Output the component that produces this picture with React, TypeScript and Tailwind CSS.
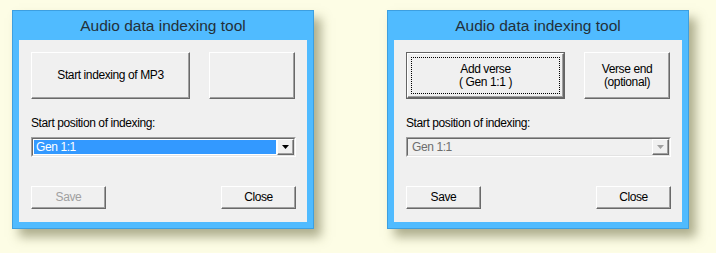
import React from "react";

const raised =
  "border border-t-white border-l-white border-r-[#696969] border-b-[#696969] bg-[#f0f0f0] shadow-[inset_-1px_-1px_0_#a0a0a0]";

function Btn({
  children,
  className = "",
  disabled = false,
  isDefault = false,
}: {
  children?: React.ReactNode;
  className?: string;
  disabled?: boolean;
  isDefault?: boolean;
}) {
  if (isDefault) {
    return (
      <div className={`border border-[#646464] ${className}`}>
        <div className={`${raised} h-full w-full p-[3px]`}>
          <div className="h-full w-full border border-dotted border-black flex flex-col items-center justify-center leading-[13px] text-black">
            {children}
          </div>
        </div>
      </div>
    );
  }
  return (
    <div
      className={`${raised} flex flex-col items-center justify-center leading-[13px] ${
        disabled ? "text-[#a0a0a0]" : "text-black"
      } ${className}`}
    >
      {children}
    </div>
  );
}

function Combo({ active }: { active: boolean }) {
  return (
    <div className="flex h-[20px] w-[265px] border border-t-[#a0a0a0] border-l-[#a0a0a0] border-r-white border-b-white">
      <div
        className={`flex flex-1 border border-t-[#696969] border-l-[#696969] border-r-[#e3e3e3] border-b-[#e3e3e3] ${
          active ? "bg-white" : "bg-[#f0f0f0]"
        }`}
      >
        <div
          className={`flex-1 flex items-center pl-[2px] ${
            active ? "bg-[#3399ff] text-white m-px" : "text-[#6d6d6d] ml-[2px]"
          }`}
        >
          Gen 1:1
        </div>
        <div className={`${raised} w-[17px] flex items-center justify-center`}>
          <svg width="7" height="4" viewBox="0 0 7 4">
            <path d="M0 0h7L3.5 4z" fill={active ? "#000" : "#a0a0a0"} />
          </svg>
        </div>
      </div>
    </div>
  );
}

function Dialog({ mode }: { mode: "start" | "running" }) {
  const running = mode === "running";
  return (
    <div className="w-[302px] h-[219px] bg-[#50bbff] border border-[#3d9fe0] px-[6px] pb-[6px] flex flex-col shadow-[7px_8px_10px_rgba(95,95,55,0.5)]">
      <div className="h-[29px] flex items-center justify-center text-[15.5px] text-[#233039] pt-[1px]">
        Audio data indexing tool
      </div>
      <div className="flex-1 bg-[#f0f0f0] pl-[12px] pr-[11px] pt-[12px] flex flex-col text-[12px] tracking-[-0.4px]">
        <div className="flex gap-[19px]">
          {running ? (
            <Btn isDefault className="w-[159px] h-[47px]">
              <span>Add verse</span>
              <span>( Gen 1:1 )</span>
            </Btn>
          ) : (
            <Btn className="w-[159px] h-[47px]">Start indexing of MP3</Btn>
          )}
          <Btn className="w-[86px] h-[47px]">
            {running && (
              <>
                <span>Verse end</span>
                <span>(optional)</span>
              </>
            )}
          </Btn>
        </div>
        <div className="mt-[17px] h-[14px] leading-[14px] text-black">
          Start position of indexing:
        </div>
        <div className="mt-[7px]">
          <Combo active={!running} />
        </div>
        <div className="mt-[29px] flex justify-between w-[265px]">
          <Btn disabled={!running} className="w-[75px] h-[23px]">
            Save
          </Btn>
          <Btn className="w-[75px] h-[23px]">Close</Btn>
        </div>
      </div>
    </div>
  );
}

export default function App() {
  return (
    <div
      className="w-[716px] h-[253px] bg-[#fdfde5] flex gap-[73px] pl-[12px] pt-[10px]"
      style={{ fontFamily: '"Liberation Sans", Arial, sans-serif' }}
    >
      <Dialog mode="start" />
      <Dialog mode="running" />
    </div>
  );
}
